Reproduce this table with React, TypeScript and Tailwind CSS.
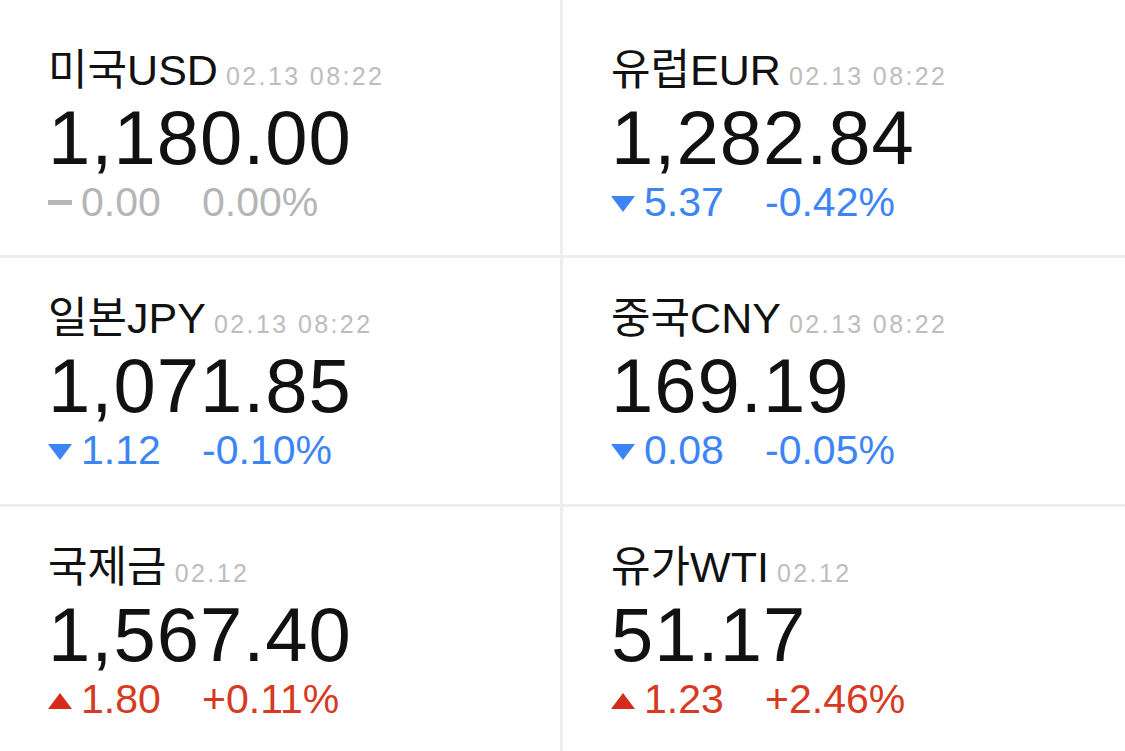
import React from "react";

type Dir = "up" | "down" | "flat";
type Item = { name: string; date: string; price: string; change: string; pct: string; dir: Dir };

const items: Item[] = [
  { name: "미국USD", date: "02.13 08:22", price: "1,180.00", change: "0.00", pct: "0.00%", dir: "flat" },
  { name: "유럽EUR", date: "02.13 08:22", price: "1,282.84", change: "5.37", pct: "-0.42%", dir: "down" },
  { name: "일본JPY", date: "02.13 08:22", price: "1,071.85", change: "1.12", pct: "-0.10%", dir: "down" },
  { name: "중국CNY", date: "02.13 08:22", price: "169.19", change: "0.08", pct: "-0.05%", dir: "down" },
  { name: "국제금", date: "02.12", price: "1,567.40", change: "1.80", pct: "+0.11%", dir: "up" },
  { name: "유가WTI", date: "02.12", price: "51.17", change: "1.23", pct: "+2.46%", dir: "up" },
];

const FONT = { fontFamily: '"Liberation Sans", "Noto Sans CJK KR", sans-serif' };

function Marker({ dir }: { dir: Dir }) {
  if (dir === "down")
    return (
      <svg width="24" height="16" viewBox="0 0 24 16" className="inline-block align-[4px]">
        <polygon points="0,0 24,0 12,16" fill="#3d85f6" />
      </svg>
    );
  if (dir === "up")
    return (
      <svg width="24" height="16" viewBox="0 0 24 16" className="inline-block align-[4px]">
        <polygon points="0,16 24,16 12,0" fill="#d42b1c" />
      </svg>
    );
  return (
    <svg width="24" height="16" viewBox="0 0 24 16" className="inline-block align-[4px]">
      <rect x="0" y="4" width="24" height="5" fill="#b8b8b8" />
    </svg>
  );
}

function Cell({ item, first }: { item: Item; first: boolean }) {
  const color =
    item.dir === "down" ? "text-[#3d85f6]" : item.dir === "up" ? "text-[#d63a22]" : "text-[#b5b5b5]";
  return (
    <div className={`bg-white pl-[48px] ${first ? "pt-[49px]" : "pt-[39px]"}`} style={FONT}>
      <div className="flex items-baseline gap-[8px]">
        <span className="text-[43px] leading-[42px] text-[#111]">{item.name}</span>
        <span className="text-[25px] leading-[24px] tracking-[2.4px] text-[#bdbdbd]">{item.date}</span>
      </div>
      <div className="mt-[9px] text-[76px] leading-[76px] tracking-[1px] text-[#111]">{item.price}</div>
      <div className={`mt-[6px] text-[41px] leading-[40px] whitespace-nowrap ${color}`}>
        <span className="inline-block w-[154px]">
          <Marker dir={item.dir} />
          <span className="ml-[9px]">{item.change}</span>
        </span>
        <span>{item.pct}</span>
      </div>
    </div>
  );
}

export default function App() {
  return (
    <div className="w-[1125px] h-[751px] overflow-hidden bg-[#eeeeee]">
      <div className="grid grid-cols-[560px_1fr] grid-rows-[255px_246px_246px] gap-[3px]">
        {items.map((it, i) => (
          <Cell key={i} item={it} first={i < 2} />
        ))}
      </div>
    </div>
  );
}
